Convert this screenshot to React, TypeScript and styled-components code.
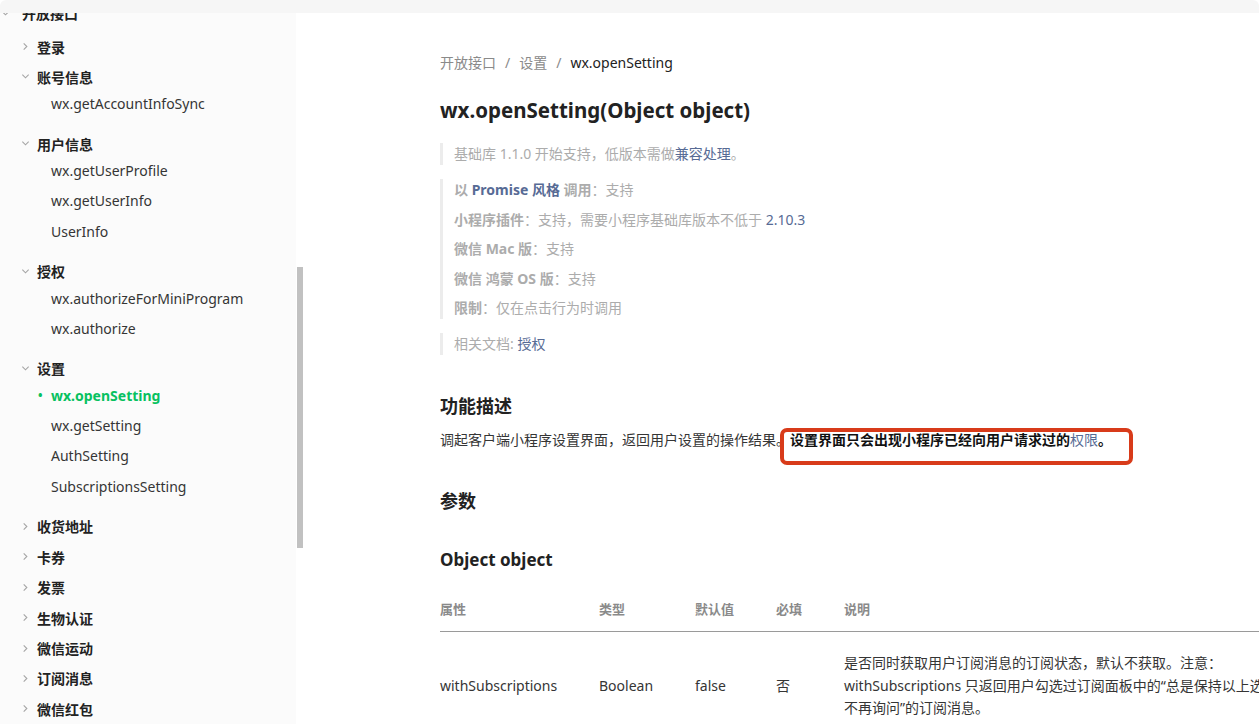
import * as React from "react";
import styled, { createGlobalStyle } from "styled-components";

const GlobalStyle = createGlobalStyle`
  html, body {
    margin: 0;
    padding: 0;
    background: #ffffff;
    overflow: hidden;
  }

  body {
    font-family: "Noto Sans", "Noto Sans CJK SC", sans-serif;
    color: #353535;
  }
`;

const Page = styled.div`
  display: flex;
  flex-direction: column;
  width: 1259px;
  height: 724px;
  overflow: hidden;
`;

const TopBar = styled.div`
  flex: none;
  height: 13px;
  background: #f6f6f6;
  border-radius: 6px 6px 0 0;
  position: relative;
  z-index: 2;
`;

const Body = styled.div`
  display: flex;
  flex: 1;
  min-height: 0;
`;

const Sidebar = styled.nav`
  flex: none;
  width: 296px;
  background: #fbfbfb;
  overflow: hidden;
`;

const SideList = styled.ul`
  list-style: none;
  margin: -15px 0 0;
  padding: 0;
`;

const ScrollTrack = styled.div`
  flex: none;
  width: 8px;
  padding: 254px 0 0 1px;
  box-sizing: border-box;
`;

const ScrollThumb = styled.div`
  width: 6px;
  height: 281px;
  background: #c1c1c1;
`;

interface RowProps {
  indent: number;
}

const NodeRow = styled.div<RowProps>`
  display: flex;
  align-items: center;
  height: 30.4px;
  padding-left: ${(p) => p.indent}px;
  font-size: 14px;
  font-weight: 600;
  color: #222222;
  white-space: nowrap;
`;

const Chevron = styled.span<{ w: number }>`
  display: inline-flex;
  width: ${(p) => p.w}px;
  color: #a5a5a5;
`;

const ChildList = styled.ul<{ first?: number; after?: number }>`
  list-style: none;
  margin: ${(p) => p.first ?? -3}px 0 ${(p) => p.after ?? 9}px;
  padding: 0;
`;

const ChildItem = styled.li<{ active?: boolean }>`
  position: relative;
  height: 30.4px;
  line-height: 30.4px;
  padding-left: 51px;
  font-size: 14px;
  font-weight: ${(p) => (p.active ? 700 : 400)};
  color: ${(p) => (p.active ? "#07c160" : "#353535")};
  white-space: nowrap;

  &::before {
    content: ${(p) => (p.active ? '"•"' : "none")};
    position: absolute;
    left: 38px;
    font-size: 12px;
  }
`;

const Main = styled.main`
  flex: 1;
  min-width: 0;
  padding: 40px 0 0 136px;
  overflow: hidden;
`;

const Breadcrumb = styled.div`
  display: flex;
  gap: 9px;
  font-size: 14px;
  line-height: 20px;
  color: #8a8a8a;
  white-space: nowrap;

  strong {
    font-weight: 400;
    color: #222222;
  }
`;

const Title = styled.h1`
  margin: 22px 0 18px;
  font-size: 20.5px;
  line-height: 30px;
  font-weight: 700;
  color: #222222;
  white-space: nowrap;
`;

const Quote = styled.div`
  display: flex;
  flex-direction: column;
  gap: 7.5px;
  margin-bottom: 14px;
  padding-left: 11px;
  border-left: 3px solid #ececec;
  font-size: 14px;
  line-height: 22px;
  color: #acacac;
  white-space: nowrap;

  b {
    font-weight: 700;
  }
`;

const Link = styled.span<{ bold?: boolean }>`
  color: #576b95;
  font-weight: ${(p) => (p.bold ? 700 : 400)};
`;

const SectionTitle = styled.h2<{ top?: number }>`
  margin: ${(p) => p.top ?? 0}px 0 0;
  font-size: 18px;
  line-height: 26px;
  font-weight: 700;
  color: #222222;
`;

const Paragraph = styled.p`
  position: relative;
  margin: 9px 0 36px;
  font-size: 14px;
  line-height: 24px;
  color: #353535;
  white-space: nowrap;

  b {
    color: #111111;
  }
`;

const Highlight = styled.span`
  position: absolute;
  left: 340px;
  top: 0;
  width: 353px;
  height: 37px;
  box-sizing: border-box;
  border: 4px solid #d83b1a;
  border-radius: 7px;
`;

const SubTitle = styled.h3`
  margin: 34px 0 15px;
  font-size: 17px;
  line-height: 24px;
  font-weight: 700;
  color: #222222;
`;

const Table = styled.table`
  width: 1000px;
  border-collapse: collapse;
  font-size: 14px;
  color: #353535;
`;

const Th = styled.th<{ w?: number }>`
  width: ${(p) => (p.w ? `${p.w}px` : "auto")};
  padding: 11px 0;
  text-align: left;
  font-size: 13px;
  line-height: 22px;
  font-weight: 600;
  color: #8a8a8a;
  border-bottom: 1px solid #9a9a9a;
`;

const Td = styled.td`
  padding: 20px 0;
  line-height: 22.5px;
  vertical-align: middle;
  white-space: nowrap;
`;

function Arrow({ open }: { open: boolean }) {
  return (
    <svg width="9" height="9" viewBox="0 0 10 10" fill="none">
      {open ? (
        <polyline points="1.5,3 5,6.5 8.5,3" stroke="currentColor" strokeWidth="1.2" />
      ) : (
        <polyline points="3,1.5 6.5,5 3,8.5" stroke="currentColor" strokeWidth="1.2" />
      )}
    </svg>
  );
}

interface Group {
  label: string;
  children?: string[];
}

const groups: Group[] = [
  { label: "登录" },
  { label: "账号信息", children: ["wx.getAccountInfoSync"] },
  { label: "用户信息", children: ["wx.getUserProfile", "wx.getUserInfo", "UserInfo"] },
  { label: "授权", children: ["wx.authorizeForMiniProgram", "wx.authorize"] },
  {
    label: "设置",
    children: ["wx.openSetting", "wx.getSetting", "AuthSetting", "SubscriptionsSetting"],
  },
  { label: "收货地址" },
  { label: "卡券" },
  { label: "发票" },
  { label: "生物认证" },
  { label: "微信运动" },
  { label: "订阅消息" },
  { label: "微信红包" },
];

function SideNav() {
  return (
    <Sidebar>
      <SideList>
        <li>
          <NodeRow indent={1}>
            <Chevron w={21}>
              <Arrow open />
            </Chevron>
            开放接口
          </NodeRow>
          <ChildList first={3} after={0}>
            {groups.map((g) => (
              <li key={g.label}>
                <NodeRow indent={21}>
                  <Chevron w={16}>
                    <Arrow open={!!g.children} />
                  </Chevron>
                  {g.label}
                </NodeRow>
                {g.children && (
                  <ChildList>
                    {g.children.map((c) => (
                      <ChildItem key={c} active={c === "wx.openSetting"}>
                        {c}
                      </ChildItem>
                    ))}
                  </ChildList>
                )}
              </li>
            ))}
          </ChildList>
        </li>
      </SideList>
    </Sidebar>
  );
}

export default function App() {
  return (
    <Page>
      <GlobalStyle />
      <TopBar />
      <Body>
        <SideNav />
        <ScrollTrack>
          <ScrollThumb />
        </ScrollTrack>
        <Main>
          <Breadcrumb>
            <span>开放接口</span>
            <span>/</span>
            <span>设置</span>
            <span>/</span>
            <strong>wx.openSetting</strong>
          </Breadcrumb>
          <Title>wx.openSetting(Object object)</Title>

          <Quote>
            <div>
              基础库 1.1.0 开始支持，低版本需做<Link>兼容处理</Link>。
            </div>
          </Quote>
          <Quote>
            <div>
              <b>以 </b>
              <Link bold>Promise 风格</Link>
              <b> 调用</b>：支持
            </div>
            <div>
              <b>小程序插件</b>：支持，需要小程序基础库版本不低于 <Link>2.10.3</Link>
            </div>
            <div>
              <b>微信 Mac 版</b>：支持
            </div>
            <div>
              <b>微信 鸿蒙 OS 版</b>：支持
            </div>
            <div>
              <b>限制</b>：仅在点击行为时调用
            </div>
          </Quote>
          <Quote>
            <div>
              相关文档: <Link>授权</Link>
            </div>
          </Quote>

          <SectionTitle top={38}>功能描述</SectionTitle>
          <Paragraph>
            调起客户端小程序设置界面，返回用户设置的操作结果。
            <b>
              设置界面只会出现小程序已经向用户请求过的<Link>权限</Link>。
            </b>
            <Highlight />
          </Paragraph>

          <SectionTitle>参数</SectionTitle>
          <SubTitle>Object object</SubTitle>

          <Table>
            <thead>
              <tr>
                <Th w={159}>属性</Th>
                <Th w={96}>类型</Th>
                <Th w={81}>默认值</Th>
                <Th w={68}>必填</Th>
                <Th>说明</Th>
              </tr>
            </thead>
            <tbody>
              <tr>
                <Td>withSubscriptions</Td>
                <Td>Boolean</Td>
                <Td>false</Td>
                <Td>否</Td>
                <Td>
                  是否同时获取用户订阅消息的订阅状态，默认不获取。注意：
                  <br />
                  withSubscriptions 只返回用户勾选过订阅面板中的“总是保持以上选择，
                  <br />
                  不再询问”的订阅消息。
                </Td>
              </tr>
            </tbody>
          </Table>
        </Main>
      </Body>
    </Page>
  );
}
